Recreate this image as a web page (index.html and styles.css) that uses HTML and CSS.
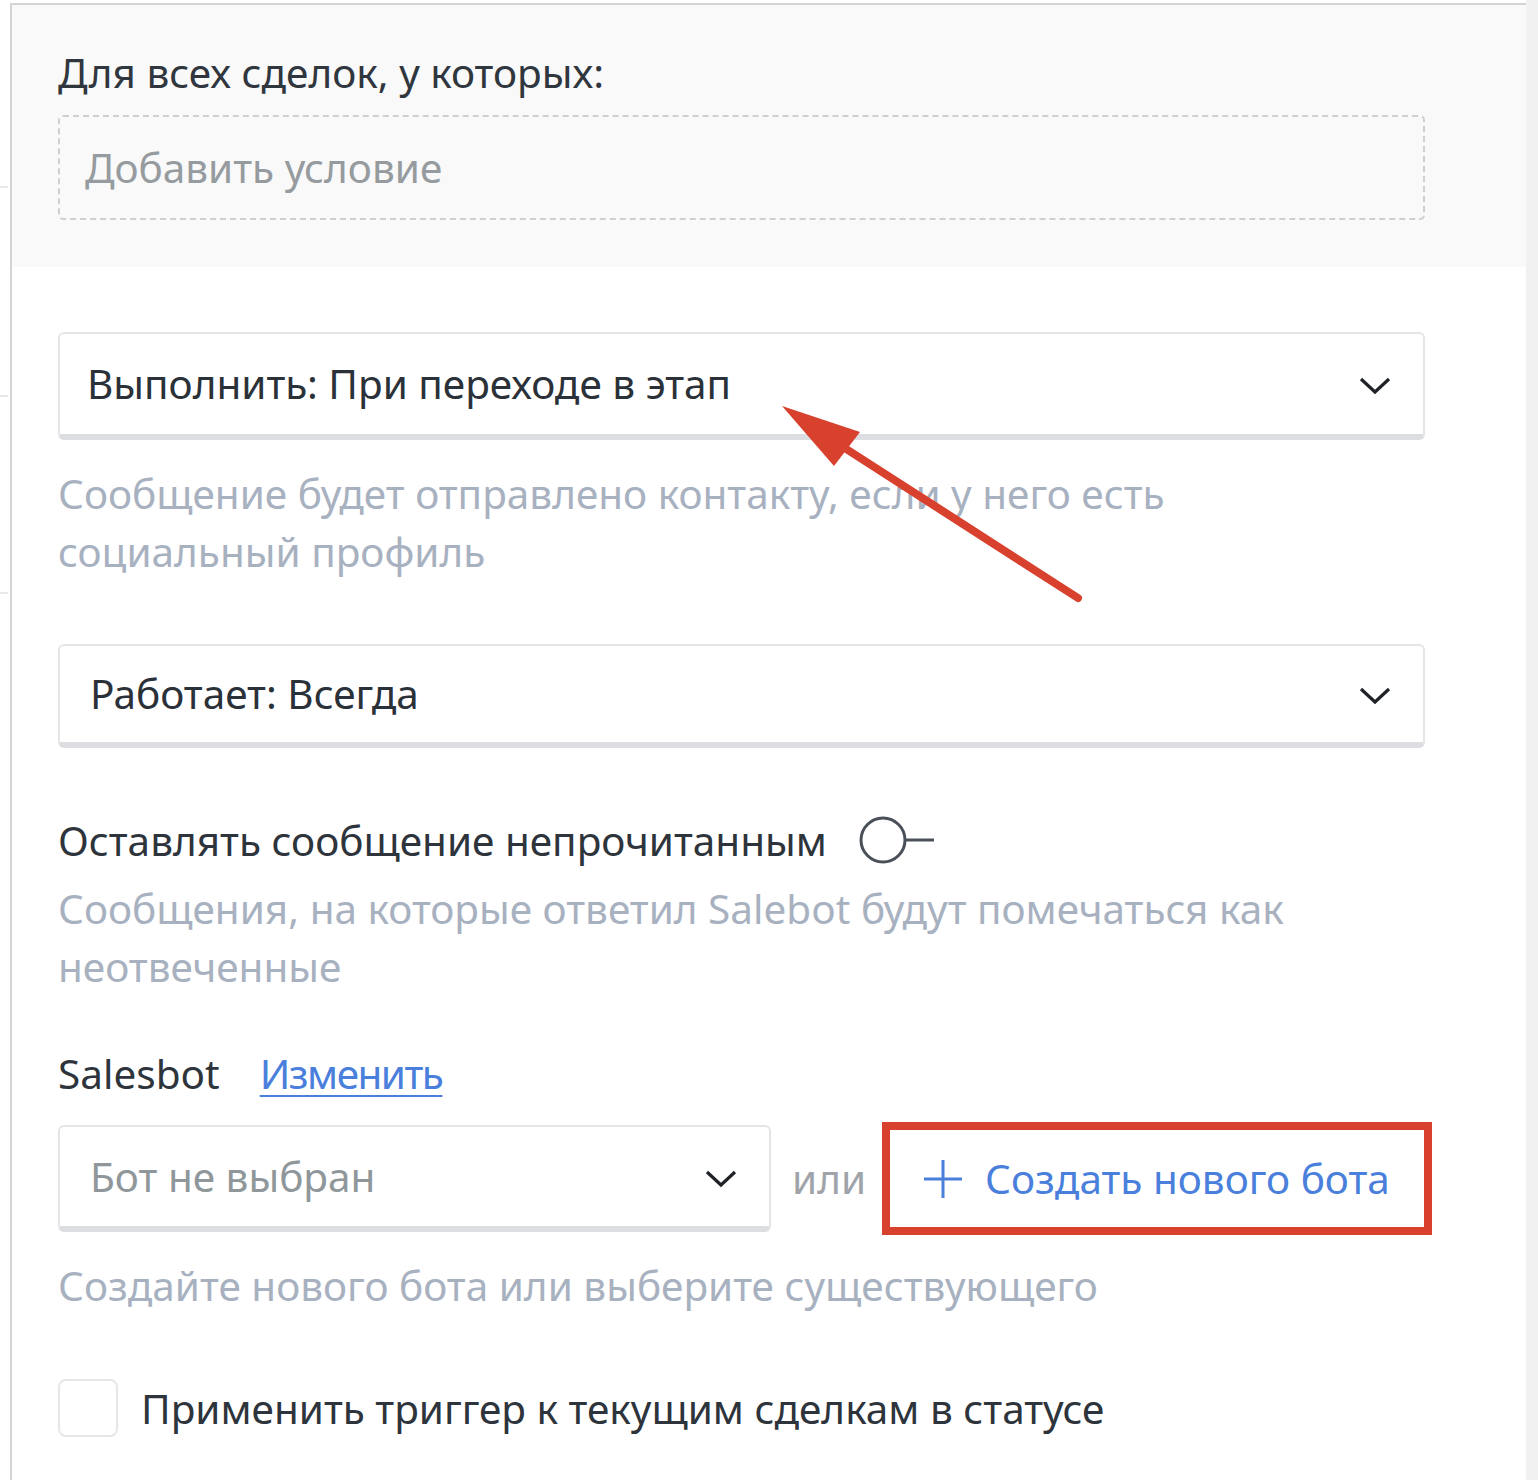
FILE: index.html
```html
<!DOCTYPE html>
<html lang="ru">
<head>
<meta charset="utf-8">
<title>Триггер</title>
<link rel="stylesheet" href="styles.css">
</head>
<body>
<div class="frame">
  <div class="edge">
    <span class="tick t1"></span>
    <span class="tick t2"></span>
    <span class="tick t3"></span>
  </div>
  <div class="panel">
    <section class="cond">
      <div class="title">Для всех сделок, у которых:</div>
      <div class="dashed">Добавить условие</div>
    </section>
    <section class="body">
      <div class="select s1">
        <span class="val">Выполнить: При переходе в этап</span>
        <svg class="chev" viewBox="0 0 32 18" width="32" height="18"><path d="M2 2 L16 15 L30 2" fill="none" stroke="#1f2328" stroke-width="3.2"/></svg>
      </div>
      <p class="help h1">Сообщение будет отправлено контакту, если у него есть<br>социальный профиль</p>
      <div class="select s2">
        <span class="val">Работает: Всегда</span>
        <svg class="chev" viewBox="0 0 32 18" width="32" height="18"><path d="M2 2 L16 15 L30 2" fill="none" stroke="#1f2328" stroke-width="3.2"/></svg>
      </div>
      <div class="toggle-row">
        <span class="label">Оставлять сообщение непрочитанным</span>
        <svg class="toggle" viewBox="0 0 76 50" width="76" height="50"><circle cx="24" cy="25" r="22" fill="#fff" stroke="#4a5058" stroke-width="3"/><path d="M46 25 H75" stroke="#4a5058" stroke-width="3"/></svg>
      </div>
      <p class="help h2">Сообщения, на которые ответил Salebot будут помечаться как<br>неотвеченные</p>
      <div class="bot-head">
        <span class="label">Salesbot</span>
        <a class="link" href="#">Изменить</a>
      </div>
      <div class="bot-row">
        <div class="select s3">
          <span class="val ph">Бот не выбран</span>
          <svg class="chev" viewBox="0 0 32 18" width="32" height="18"><path d="M2 2 L16 15 L30 2" fill="none" stroke="#1f2328" stroke-width="3.2"/></svg>
        </div>
        <span class="or">или</span>
        <div class="create">
          <svg class="plus" viewBox="0 0 40 40" width="40" height="40"><path d="M20 1 V39 M1 20 H39" stroke="#4a80dc" stroke-width="3"/></svg>
          <span>Создать нового бота</span>
        </div>
      </div>
      <p class="help h3">Создайте нового бота или выберите существующего</p>
      <div class="check-row">
        <span class="box"></span>
        <span class="label">Применить триггер к текущим сделкам в статусе</span>
      </div>
    </section>
  </div>
  <div class="scroll"></div>
</div>
<svg class="arrow" width="1538" height="1480" viewBox="0 0 1538 1480">
  <path d="M1078 598 L840 445" stroke="#d9412f" stroke-width="8" stroke-linecap="round" fill="none"/>
  <path d="M782 406 L860 432 L834 466 Z" fill="#d9412f"/>
</svg>
</body>
</html>
```
FILE: styles.css
```css
html, body {
  margin: 0;
  padding: 0;
  background: #fff;
}
body {
  font-family: "Noto Sans", "Open Sans", sans-serif;
  font-stretch: 87.5%;
  font-size: 40.5px;
  color: #2f353d;
  width: 1538px;
  height: 1480px;
  overflow: hidden;
  position: relative;
}
.frame {
  display: flex;
  height: 1480px;
}
.edge {
  flex: 0 0 10px;
  position: relative;
  background: #fff;
}
.tick {
  position: absolute;
  left: 0;
  width: 8px;
  height: 2px;
  background: #e8e8e8;
}
.t1 { top: 186px; }
.t2 { top: 395px; }
.t3 { top: 592px; }
.panel {
  flex: 1 1 auto;
  min-width: 0;
  margin-top: 3px;
  border-top: 2px solid #d4d4d4;
  border-left: 2px solid #d4d4d4;
  display: flex;
  flex-direction: column;
}
.scroll {
  flex: 0 0 12px;
  background: #f1f1f1;
}
.cond {
  background: #f9f9f9;
  padding: 40px 101px 47px 46px;
  height: 262px;
  box-sizing: border-box;
}
.title {
  line-height: 56px;
  height: 56px;
  color: #30363e;
  white-space: nowrap;
}
.dashed {
  margin-top: 14px;
  height: 105px;
  box-sizing: border-box;
  border: 2px dashed #cdcfd1;
  border-radius: 5px;
  padding-left: 25px;
  display: flex;
  align-items: center;
  color: #959b9e;
}
.body {
  padding: 65px 101px 0 46px;
}
.select {
  height: 108px;
  box-sizing: border-box;
  border: 2px solid #e4e5e7;
  border-bottom: 6px solid #dcdee1;
  border-radius: 6px;
  display: flex;
  align-items: center;
  justify-content: space-between;
  padding: 0 32px 0 27px;
  background: #fff;
}
.select .val {
  line-height: 50px;
  color: #2b3138;
  white-space: nowrap;
}
.select .val.ph {
  color: #8f979b;
}
.chev {
  display: block;
  flex: none;
  margin-top: 4px;
}
.s2 {
  margin-top: 63px;
  height: 104px;
  padding-left: 30px;
}
.help {
  margin: 25px 0 0;
  line-height: 58px;
  color: #a8b1c0;
  white-space: nowrap;
}
.toggle-row {
  margin-top: 63px;
  display: flex;
  align-items: center;
  height: 58px;
  gap: 32px;
}
.toggle-row .label,
.bot-head .label,
.check-row .label {
  color: #2e343b;
  white-space: nowrap;
}
.toggle { display: block; flex: none; }
.help.h2 { margin-top: 11px; }
.bot-head {
  margin-top: 48px;
  height: 58px;
  display: flex;
  align-items: center;
  gap: 40px;
}
.link {
  color: #4a80dc;
  letter-spacing: -1.5px;
  text-decoration: underline;
  text-decoration-thickness: 2px;
  text-underline-offset: 6px;
}
.bot-row {
  margin-top: 20px;
  display: flex;
  align-items: center;
}
.s3 {
  flex: 0 0 713px;
  height: 107px;
  padding: 0 32px 0 30px;
}
.or {
  color: #9fa4aa;
  margin: 0 16px 0 21px;
}
.create {
  flex: 0 0 550px;
  height: 113px;
  box-sizing: border-box;
  border: 8px solid #d9412f;
  display: flex;
  align-items: center;
  padding-left: 33px;
  gap: 22px;
  color: #4a80dc;
  white-space: nowrap;
}
.plus { display: block; flex: none; }
.help.h3 { margin-top: 22px; }
.check-row {
  margin-top: 64px;
  display: flex;
  align-items: center;
  gap: 23px;
}
.box {
  flex: none;
  width: 60px;
  height: 58px;
  box-sizing: border-box;
  border: 2px solid #e6e7e8;
  border-radius: 8px;
}
.arrow {
  position: absolute;
  left: 0;
  top: 0;
  pointer-events: none;
}
```
